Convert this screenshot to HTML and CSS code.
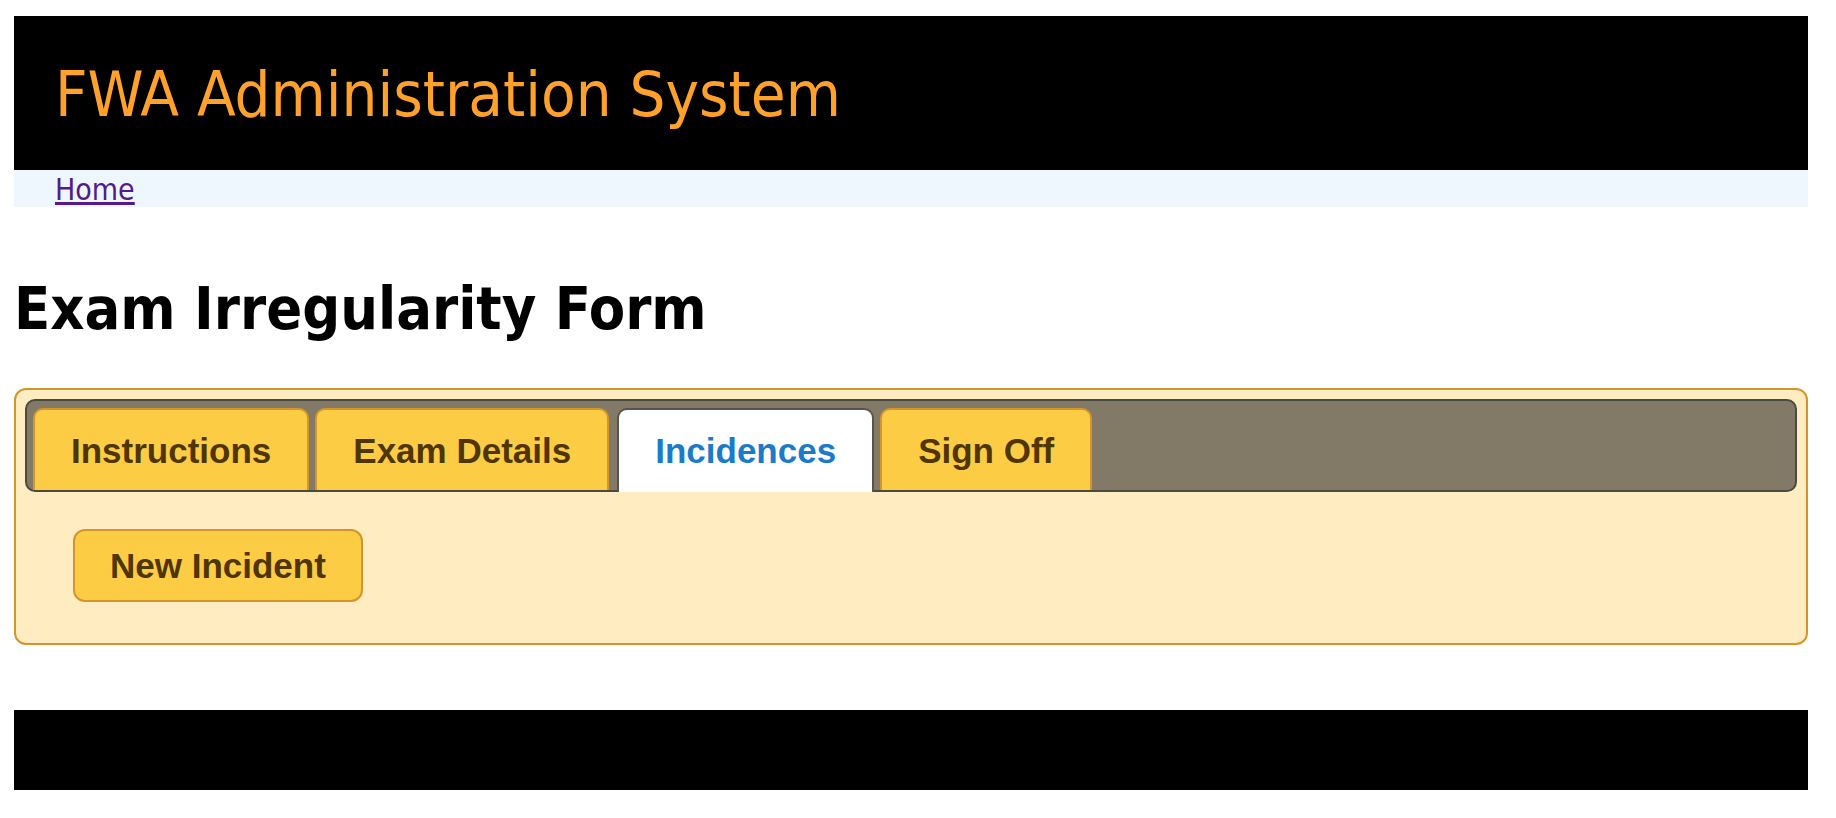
FILE: index.html
```html
<!DOCTYPE html>
<html lang="en">
<head>
<meta charset="utf-8">
<title>Exam Irregularity Form</title>
<link rel="stylesheet" href="styles.css">
</head>
<body>
<div class="page">
  <header class="site-header">
    <div class="site-title">FWA Administration System</div>
  </header>
  <nav class="crumbs"><a class="crumb-link" href="#">Home</a></nav>
  <h1 class="page-title">Exam Irregularity Form</h1>
  <div class="tabs-panel">
    <ul class="tab-bar">
      <li class="tab"><a class="tab-link" href="#">Instructions</a></li>
      <li class="tab"><a class="tab-link" href="#">Exam Details</a></li>
      <li class="tab tab-active"><a class="tab-link" href="#">Incidences</a></li>
      <li class="tab"><a class="tab-link" href="#">Sign Off</a></li>
    </ul>
    <div class="tab-body">
      <button class="btn" type="button">New Incident</button>
    </div>
  </div>
  <footer class="site-footer"></footer>
</div>
</body>
</html>
```

FILE: styles.css
```css
html, body {
  margin: 0;
  padding: 0;
  background: #ffffff;
}

.page {
  margin: 16px 28px 0 14px;
  font-family: "DejaVu Sans", sans-serif;
}

.site-header {
  background: #000000;
  height: 154px;
  display: flex;
  align-items: center;
  padding-left: 41px;
}

.site-title {
  color: #ffa12a;
  font-family: "DejaVu Sans Condensed", "DejaVu Sans", sans-serif;
  font-stretch: condensed;
  font-size: 63px;
  line-height: 1;
  padding-top: 2px;
}

.crumbs {
  background: #eff7fe;
  height: 37px;
  padding-left: 41px;
  display: flex;
  align-items: center;
}

.crumb-link {
  color: #551a8b;
  font-family: "DejaVu Sans Condensed", "DejaVu Sans", sans-serif;
  font-stretch: condensed;
  font-size: 30px;
  line-height: 1;
  padding-top: 2px;
}

.page-title {
  margin: 67px 0 43px;
  font-family: "DejaVu Sans Condensed", "DejaVu Sans", sans-serif;
  font-stretch: condensed;
  font-weight: bold;
  font-size: 59px;
  line-height: 1.2;
  color: #000000;
}

.tabs-panel {
  border: 2px solid #d4952a;
  border-radius: 12px;
  background: #ffedc1;
  padding: 9px 9px 41px;
}

.tab-bar {
  list-style: none;
  margin: 0;
  padding: 7px 6px 0;
  display: flex;
  align-items: flex-end;
  gap: 6px;
  background: #827a66;
  border: 2px solid #4b4a40;
  border-radius: 10px;
  height: 82px;
  box-sizing: content-box;
}

.tab {
  height: 80px;
  border: 2px solid #d4952a;
  border-bottom: 0;
  border-radius: 10px 10px 0 0;
  background: #fdcc45;
  display: flex;
}

.tab-link {
  display: flex;
  align-items: center;
  padding: 0 36px;
  padding-top: 3px;
  font-family: "Liberation Sans", Arial, sans-serif;
  font-weight: bold;
  font-size: 35px;
  color: #4f3500;
  text-decoration: none;
}

.tab-active {
  background: #ffffff;
  border-color: #57544a;
  height: 82px;
  margin-bottom: -2px;
  margin-left: 2px;
  position: relative;
}

.tab-active .tab-link {
  color: #1b7bc9;
  padding-bottom: 2px;
}

.tab-body {
  padding: 37px 0 0 48px;
}

.btn {
  font-family: "Liberation Sans", Arial, sans-serif;
  font-weight: bold;
  font-size: 35px;
  line-height: 39px;
  color: #4f3500;
  background: #fdcc45;
  border: 2px solid #d4952a;
  border-radius: 12px;
  padding: 15px 35px;
  cursor: pointer;
}

.site-footer {
  background: #000000;
  height: 80px;
  margin-top: 65px;
}
```
